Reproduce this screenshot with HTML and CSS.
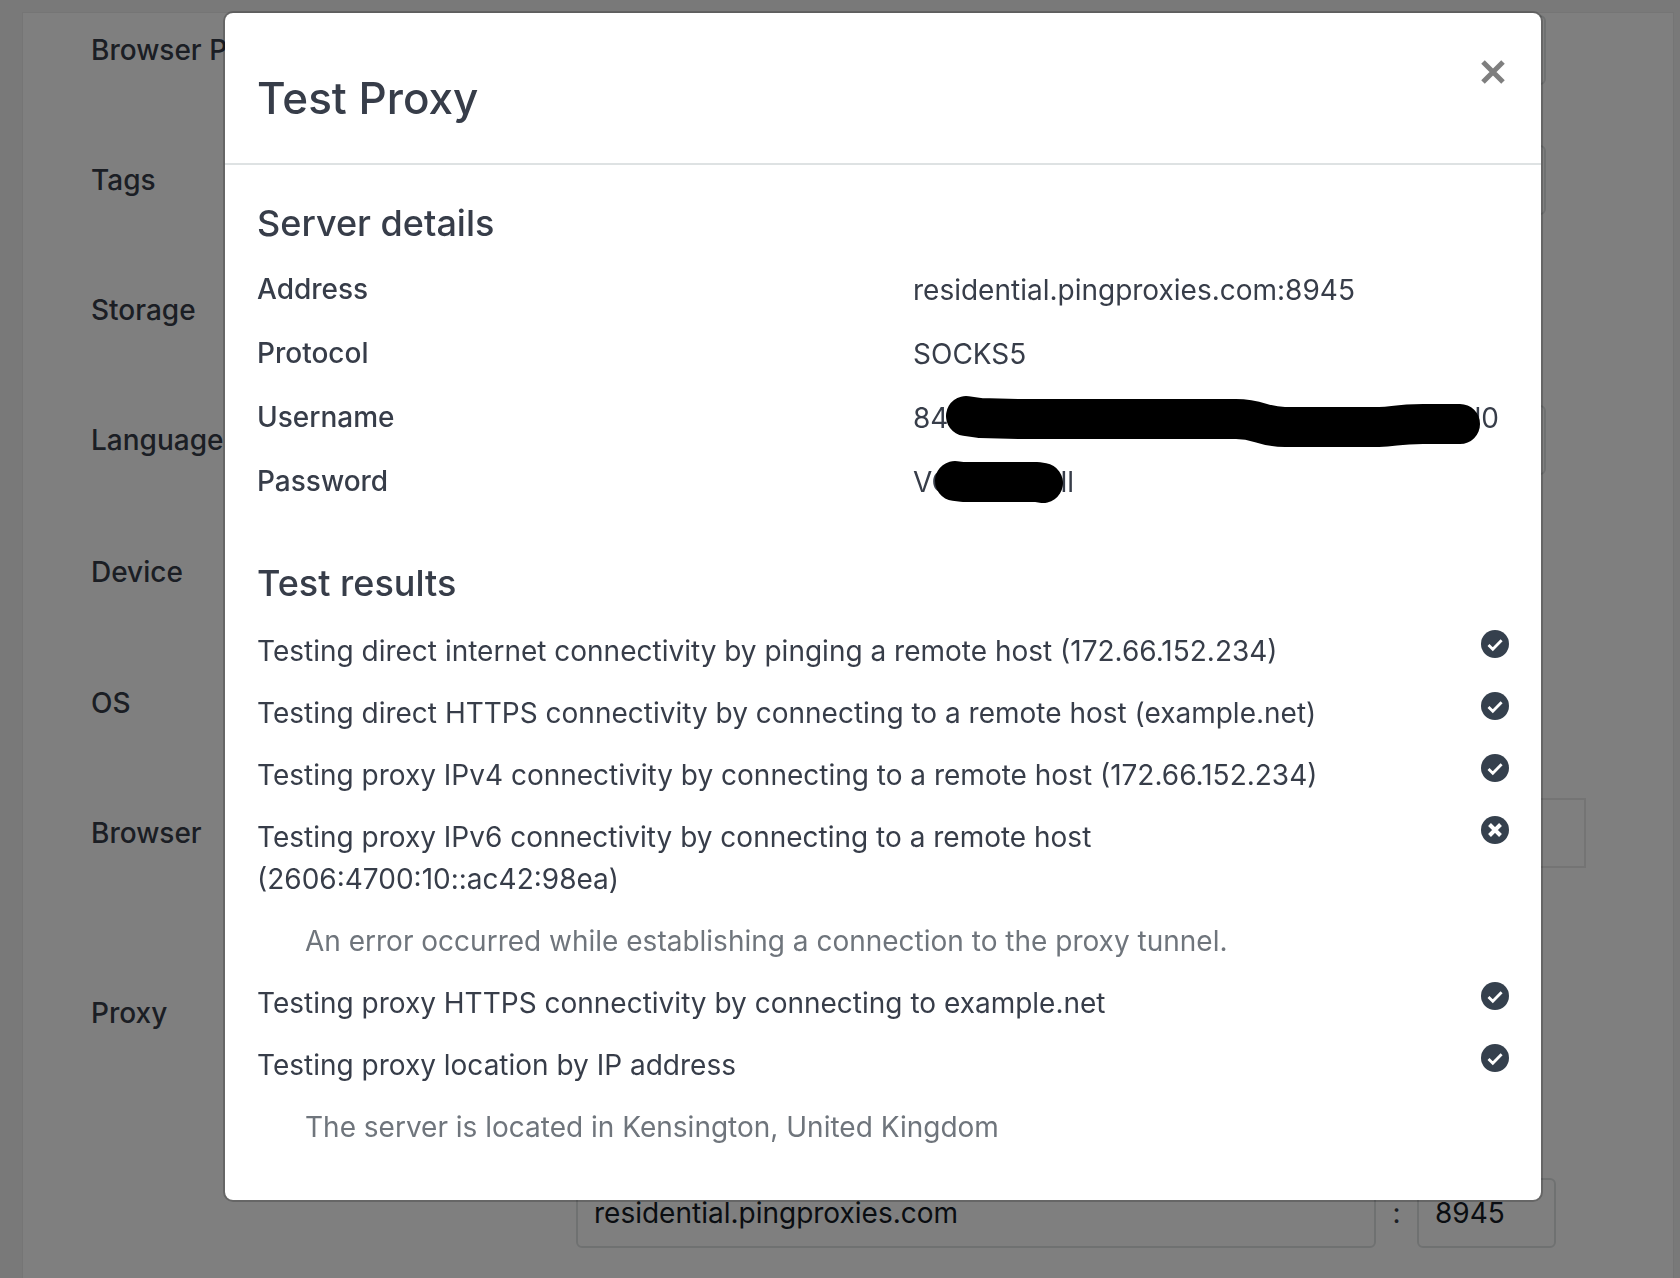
FILE: index.html
```html
<!DOCTYPE html>
<html lang="en">
<head>
  <meta charset="UTF-8"/>
  <meta name="viewport" content="width=device-width, initial-scale=1.0"/>
  <title>Test Proxy</title>
  <link rel="stylesheet" href="styles.css">
</head>
<body>
  <!-- Profile form behind the modal -->
  <form class="card">
    <div class="form-row">
      <label for="profile">Browser P</label>
      <input type="text" id="profile" class="control">
    </div>
    <div class="form-row">
      <label for="tags">Tags</label>
      <input type="text" id="tags" class="control">
    </div>
    <div class="form-row">
      <span class="row-label">Storage</span>
    </div>
    <div class="form-row">
      <label for="language">Language</label>
      <input type="text" id="language" class="control">
    </div>
    <div class="form-row tall">
      <span class="row-label">Device</span>
    </div>
    <div class="form-row">
      <span class="row-label">OS</span>
    </div>
    <div class="form-row">
      <label for="browser">Browser</label>
      <input type="text" id="browser" class="control wide">
    </div>
    <div class="form-row proxy-row">
      <label for="host">Proxy</label>
      <div class="proxy-fields">
        <input type="text" id="host" class="control host" value="residential.pingproxies.com">
        <span class="colon">:</span>
        <input type="text" class="control port" value="8945" aria-label="Port">
      </div>
    </div>
  </form>

  <svg class="sprite" aria-hidden="true">
    <symbol id="icon-check" viewBox="0 0 28 28">
      <circle cx="14" cy="14" r="14" fill="currentColor"/>
      <path d="M7.5 15 L11.8 19.2 L20.6 10.2" fill="none" stroke="#fff" stroke-width="2.8"/>
    </symbol>
    <symbol id="icon-cross" viewBox="0 0 28 28">
      <circle cx="14" cy="14" r="14" fill="currentColor"/>
      <path d="M8.5 8.5 L19.5 19.5 M19.5 8.5 L8.5 19.5" fill="none" stroke="#fff" stroke-width="4"/>
    </symbol>
  </svg>

  <div class="backdrop">
    <div class="modal" role="dialog" aria-labelledby="modal-title">
      <div class="modal-header">
        <h1 id="modal-title">Test Proxy</h1>
        <button type="button" class="close" aria-label="Close">
          <svg viewBox="0 0 24 24"><path d="M2 2 L22 22 M22 2 L2 22"/></svg>
        </button>
      </div>

      <div class="modal-body">
        <h2>Server details</h2>
        <dl class="details">
          <dt>Address</dt>
          <dd>residential.pingproxies.com:8945</dd>
          <dt>Protocol</dt>
          <dd>SOCKS5</dd>
          <dt>Username</dt>
          <dd class="masked username">
            <span>84</span><span>l0</span>
            <svg class="mask" aria-hidden="true"><path d="M53 19 L67 21 L106 22 H323 C347 22 349 30 372 30 H466 C482 30 482 27 510 27 H547"/></svg>
          </dd>
          <dt>Password</dt>
          <dd class="masked password">
            <span>VC</span><span>ll</span>
            <svg class="mask" aria-hidden="true"><path d="M42 20 L50 21 H124 L130 22"/></svg>
          </dd>
        </dl>

        <h2>Test results</h2>
        <ul class="results">
          <li>
            <span>Testing direct internet connectivity by pinging a remote host (172.66.152.234)</span>
            <svg class="status"><use href="#icon-check"/></svg>
          </li>
          <li>
            <span>Testing direct HTTPS connectivity by connecting to a remote host (example.net)</span>
            <svg class="status"><use href="#icon-check"/></svg>
          </li>
          <li>
            <span>Testing proxy IPv4 connectivity by connecting to a remote host (172.66.152.234)</span>
            <svg class="status"><use href="#icon-check"/></svg>
          </li>
          <li>
            <span>Testing proxy IPv6 connectivity by connecting to a remote host (2606:4700:10::ac42:98ea)</span>
            <svg class="status"><use href="#icon-cross"/></svg>
          </li>
          <li class="note">An error occurred while establishing a connection to the proxy tunnel.</li>
          <li>
            <span>Testing proxy HTTPS connectivity by connecting to example.net</span>
            <svg class="status"><use href="#icon-check"/></svg>
          </li>
          <li>
            <span>Testing proxy location by IP address</span>
            <svg class="status"><use href="#icon-check"/></svg>
          </li>
          <li class="note">The server is located in Kensington, United Kingdom</li>
        </ul>
      </div>
    </div>
  </div>
</body>
</html>
```
FILE: styles.css
```css
* {
  box-sizing: border-box;
}

body {
  margin: 0;
  height: 100vh;
  overflow: hidden;
  padding: 12px 6px 0 22px;
  background: #f2f2f2;
  color: #373d49;
  font-family: Inter, sans-serif;
  font-optical-sizing: none;
  font-size: 28px;
  line-height: 42px;
}

.card {
  display: flex;
  flex-direction: column;
  gap: 60px;
  min-height: 100vh;
  padding: 2px 87px 0 68px;
  background: #fff;
  border: 1px solid #ebebeb;
}

.form-row {
  display: flex;
  align-items: center;
  height: 70px;
}

.form-row.tall {
  height: 73px;
}

.form-row label,
.row-label {
  flex: 0 0 485px;
  font-weight: 500;
}

.control {
  flex: 1;
  min-width: 0;
  height: 70px;
  margin-right: 40px;
  padding: 0 16px;
  border: 2px solid #dfe2e3;
  border-radius: 6px;
  background: #fff;
  color: #141a24;
  font: inherit;
}

.control.wide {
  margin-right: 0;
  border-color: #e8e8e8;
  border-radius: 0;
}

.form-row.proxy-row {
  align-items: flex-start;
  height: auto;
  margin-top: 50px;
}

.proxy-row label {
  line-height: 70px;
}

.proxy-fields {
  flex: 1;
  display: flex;
  align-items: center;
  margin: 200px 30px 0 0;
}

.proxy-fields .control {
  margin: 0;
}

.proxy-fields .port {
  flex: 0 0 139px;
}

.colon {
  width: 41px;
  text-align: center;
}

.sprite {
  position: absolute;
  width: 0;
  height: 0;
}

/* Modal */
.backdrop {
  position: fixed;
  inset: 0;
  padding: 11px 137px 0 223px;
  background: rgba(0, 0, 0, 0.5);
}

.modal {
  background: #fff;
  background-clip: padding-box;
  border: 2px solid rgba(0, 0, 0, 0.2);
  border-radius: 10px;
}

.modal-header {
  display: flex;
  justify-content: space-between;
  align-items: flex-start;
  padding: 57px 32px 37px;
  border-bottom: 2px solid #dee2e3;
}

h1,
h2 {
  margin: 0;
  font-weight: 500;
}

h1 {
  font-size: 44px;
  line-height: 56px;
}

h2 {
  font-size: 36px;
  line-height: 52px;
}

.close {
  width: 24px;
  height: 24px;
  margin: -10px 4px 0 0;
  padding: 0;
  border: none;
  background: none;
  cursor: pointer;
}

.close svg {
  display: block;
  stroke: #7f7f7f;
  stroke-width: 5;
}

.modal-body {
  padding: 32px 32px 52px;
}

.details {
  display: grid;
  grid-template-columns: 1fr 1fr;
  gap: 22px 60px;
  margin: 20px 0 54px;
}

.details dt {
  font-weight: 500;
  line-height: 40px;
}

.details dd {
  margin: 0;
}

/* Values with the middle part blacked out */
.masked {
  position: relative;
  display: flex;
  justify-content: space-between;
}

.masked.username {
  width: 586px;
}

.masked.password {
  width: 161px;
}

.mask {
  position: absolute;
  top: 0;
  left: 0;
  width: 100%;
  height: 100%;
  overflow: visible;
  fill: none;
  stroke: #000;
  stroke-width: 40;
  stroke-linecap: round;
  stroke-linejoin: round;
}

.results {
  display: flex;
  flex-direction: column;
  gap: 20px;
  margin: 21px 0 0;
  padding: 0;
  list-style: none;
}

.results li {
  display: flex;
  justify-content: space-between;
  gap: 82px;
}

.results .note {
  padding-left: 48px;
  color: #6f757c;
}

.status {
  flex: 0 0 28px;
  height: 28px;
  color: #35404d;
}
```
